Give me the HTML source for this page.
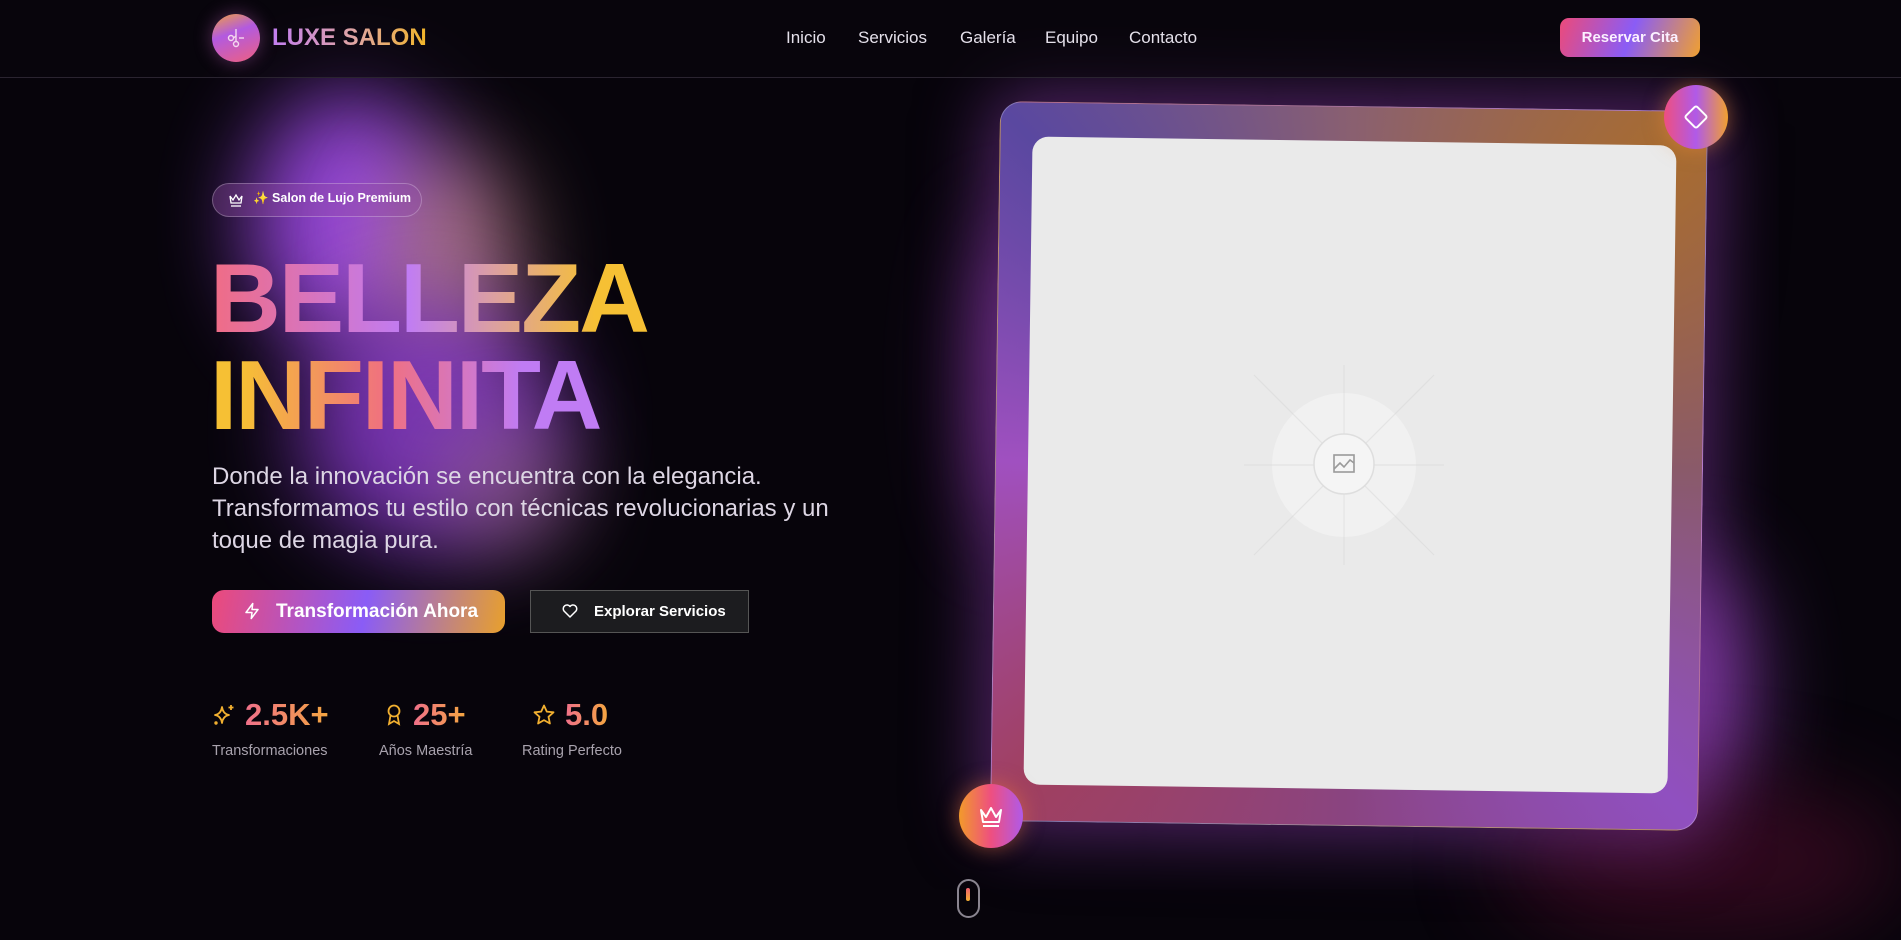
<!DOCTYPE html>
<html><head><meta charset="utf-8"><style>
*{margin:0;padding:0;box-sizing:border-box}
html,body{width:1901px;height:924px;overflow:hidden;background:#07040b;font-family:"Liberation Sans",sans-serif;color:#fff}
.abs{position:absolute}
.blob{position:absolute;border-radius:50%;filter:blur(45px)}
header{position:absolute;left:0;top:0;width:1901px;height:78px;border-bottom:1px solid #2a2430;background:rgba(10,6,14,.6)}
.nav a{position:absolute;top:28px;font-size:17px;color:#e4e0ea;text-decoration:none}
.grad{background-clip:text;-webkit-background-clip:text;color:transparent}
h1{position:absolute;left:210px;font-size:101px;font-weight:900;letter-spacing:-2px;line-height:1;white-space:nowrap}
p.lead{position:absolute;left:212px;top:461px;font-size:24px;line-height:32px;color:#ddd6e4;width:672px}
.stat .n{position:absolute;top:697px;font-size:31px;font-weight:bold;background:linear-gradient(90deg,#f0708a,#f4a640);-webkit-background-clip:text;background-clip:text;color:transparent}
.stat .l{position:absolute;top:743px;font-size:14.5px;color:#a8a2ad}
</style></head><body>
<!-- background glows -->
<div class="blob" style="left:250px;top:90px;width:200px;height:260px;background:#9a48e0;opacity:.95"></div>
<div class="blob" style="left:380px;top:150px;width:140px;height:230px;background:#c48890;opacity:.75"></div>
<div class="blob" style="left:300px;top:300px;width:260px;height:250px;background:#8f3ed6;opacity:.8"></div>
<div class="blob" style="left:440px;top:420px;width:130px;height:130px;background:#a07088;opacity:.6"></div>
<div class="blob" style="left:980px;top:220px;width:70px;height:320px;background:#a640c8;opacity:.6"></div>
<div class="blob" style="left:1640px;top:560px;width:110px;height:260px;background:#a44ad0;opacity:.7"></div>
<div class="blob" style="left:1500px;top:780px;width:400px;height:160px;background:#3a0a22;opacity:.8"></div>

<!-- frame -->
<div class="abs" style="left:995px;top:106px;width:708px;height:720px;border-radius:22px;transform:rotate(0.8deg);box-shadow:0 0 70px 10px rgba(160,70,200,.5);"></div>
<div class="abs" style="left:995px;top:106px;width:708px;height:720px;border-radius:22px;transform:rotate(0.8deg);background:conic-gradient(from 0deg at 50% 50%,#8a6070,#a86c30 45deg,#8a5a6a 90deg,#9050c0 135deg,#8a4480 180deg,#a04060 225deg,#a050c0 270deg,#5a48a0 315deg,#8a6070 360deg);border:1px solid rgba(255,255,255,.25)"></div>
<div class="abs" style="left:1028px;top:141px;width:644px;height:648px;border-radius:16px;background:#eaeaea;transform:rotate(0.8deg)"></div>
<svg class="abs" style="left:1244px;top:365px" width="200" height="200" viewBox="0 0 200 200">
<g stroke="#e0e0e0" stroke-width="1.2">
<line x1="100" y1="0" x2="100" y2="200"/><line x1="0" y1="100" x2="200" y2="100"/>
<line x1="10" y1="10" x2="190" y2="190"/><line x1="190" y1="10" x2="10" y2="190"/></g>
<circle cx="100" cy="100" r="72" fill="#f1f1f1"/>
<g stroke="#e4e4e4" stroke-width="1.2">
<line x1="100" y1="28" x2="100" y2="172"/><line x1="28" y1="100" x2="172" y2="100"/>
<line x1="49" y1="49" x2="151" y2="151"/><line x1="151" y1="49" x2="49" y2="151"/></g>
<circle cx="100" cy="99" r="30" fill="#f5f5f5" stroke="#dedede" stroke-width="1.5"/>
<rect x="90" y="90" width="20" height="17" fill="none" stroke="#9a9a9a" stroke-width="1.6"/>
<path d="M90 104 L96 98 L100 102 L106 95 L110 98" fill="none" stroke="#9a9a9a" stroke-width="1.6"/>
</svg>
<!-- badges -->
<div class="abs" style="left:1664px;top:85px;width:64px;height:64px;border-radius:50%;background:linear-gradient(90deg,#ee4f80,#b05ae8 50%,#f0a030);box-shadow:0 0 20px rgba(240,140,60,.5)"></div>
<svg class="abs" style="left:1680px;top:101px" width="32" height="32" viewBox="0 0 32 32"><rect x="8" y="8" width="16" height="16" rx="2" transform="rotate(45 16 16)" fill="none" stroke="#fff" stroke-width="2"/></svg>
<div class="abs" style="left:959px;top:784px;width:64px;height:64px;border-radius:50%;background:linear-gradient(90deg,#f29a2a,#ee4f80 50%,#b05ae8);box-shadow:0 0 20px rgba(240,120,60,.5)"></div>
<svg class="abs" style="left:975px;top:800px" width="32" height="32" viewBox="0 0 32 32"><path d="M6 10 L11 17 L16 8 L21 17 L26 10 L24 22 H8 Z" fill="none" stroke="#fff" stroke-width="2" stroke-linejoin="round"/><line x1="8" y1="26" x2="24" y2="26" stroke="#fff" stroke-width="2"/></svg>

<header></header>
<div class="abs" style="left:212px;top:14px;width:48px;height:48px;border-radius:50%;background:linear-gradient(160deg,#f0a040,#b25ae0 40%,#ee6080);box-shadow:0 0 18px rgba(200,100,200,.4)"></div>
<svg class="abs" style="left:224px;top:26px" width="24" height="24" viewBox="0 0 24 24" fill="none" stroke="#f4d8f0" stroke-width="1.4"><circle cx="7" cy="12" r="2.5"/><circle cx="12" cy="18" r="2.5"/><line x1="12" y1="3" x2="12" y2="15.5"/><line x1="9.5" y1="12" x2="12" y2="10"/><line x1="15" y1="12" x2="20" y2="12"/></svg>
<div class="abs grad" style="left:272px;top:24px;font-size:24px;font-weight:bold;background-image:linear-gradient(90deg,#c27ef0,#e0a6a0 55%,#f2b528)">LUXE SALON</div>
<div class="nav"><a style="left:786px">Inicio</a><a style="left:858px">Servicios</a><a style="left:960px">Galería</a><a style="left:1045px">Equipo</a><a style="left:1129px">Contacto</a></div>
<div class="abs" style="left:1560px;top:18px;width:140px;height:39px;border-radius:9px;background:linear-gradient(110deg,#ec4a7a,#8a5cf6 50%,#f0a030);font-size:15px;font-weight:bold;text-align:center;line-height:39px;color:#fbf0ff">Reservar Cita</div>

<!-- badge -->
<div class="abs" style="left:212px;top:183px;width:210px;height:34px;border-radius:17px;border:1px solid rgba(255,255,255,.25);background:rgba(150,80,170,.35)"></div>
<svg class="abs" style="left:228px;top:192px" width="16" height="16" viewBox="0 0 16 16" fill="none" stroke="#fff" stroke-width="1.3"><path d="M2 4 L5 8 L8 3 L11 8 L14 4 L13 11 H3 Z"/><line x1="3" y1="14" x2="13" y2="14"/></svg>
<div class="abs" style="left:253px;top:191px;font-size:12.5px;font-weight:bold;color:#fff">✨ Salon de Lujo Premium</div>

<h1 class="grad" style="top:249px;font-size:98px;background-image:linear-gradient(90deg,#f06c84,#c07cf4 45%,#dca0a0 65%,#f6c034 88%)">BELLEZA</h1>
<h1 class="grad" style="top:346px;font-size:98px;background-image:linear-gradient(90deg,#f6c034 8%,#f07080 45%,#c07cf4 80%)">INFINITA</h1>
<p class="lead">Donde la innovación se encuentra con la elegancia. Transformamos tu estilo con técnicas revolucionarias y un toque de magia pura.</p>

<div class="abs" style="left:212px;top:590px;width:293px;height:43px;border-radius:12px;background:linear-gradient(100deg,#ec4a7a,#8a5cf6 52%,#e8a02c)"></div>
<svg class="abs" style="left:243px;top:602px" width="18" height="18" viewBox="0 0 24 24" fill="none" stroke="#fff" stroke-width="2" stroke-linejoin="round"><path d="M13 2 L4 14 H12 L11 22 L20 10 H12 Z"/></svg>
<div class="abs" style="left:276px;top:601px;font-size:19px;font-weight:bold">Transformación Ahora</div>
<div class="abs" style="left:530px;top:590px;width:219px;height:43px;border:1px solid #555;background:#1c1c1f"></div>
<svg class="abs" style="left:561px;top:602px" width="18" height="18" viewBox="0 0 24 24" fill="none" stroke="#fff" stroke-width="2"><path d="M12 20 L4 12 A4.5 4.5 0 0 1 12 6 A4.5 4.5 0 0 1 20 12 Z" stroke-linejoin="round"/></svg>
<div class="abs" style="left:594px;top:603px;font-size:15px;font-weight:bold">Explorar Servicios</div>

<div class="stat">
<svg class="abs" style="left:212px;top:703px" width="24" height="24" viewBox="0 0 24 24" fill="none" stroke="#f2b030" stroke-width="1.8" stroke-linejoin="round"><path d="M10 4 Q11 11 17 12 Q11 13 10 20 Q9 13 3 12 Q9 11 10 4Z"/><path d="M19 2 V7 M16.5 4.5 H21.5"/><circle cx="4" cy="20" r=".8"/></svg>
<div class="n" style="left:245px">2.5K+</div><div class="l" style="left:212px">Transformaciones</div>
<svg class="abs" style="left:383px;top:703px" width="22" height="24" viewBox="0 0 22 24" fill="none" stroke="#f2b030" stroke-width="1.8"><circle cx="11" cy="8" r="5.5"/><path d="M7.5 12.5 L6 21 L11 18 L16 21 L14.5 12.5"/></svg>
<div class="n" style="left:413px">25+</div><div class="l" style="left:379px">Años Maestría</div>
<svg class="abs" style="left:532px;top:703px" width="24" height="24" viewBox="0 0 24 24" fill="none" stroke="#f2b030" stroke-width="1.8" stroke-linejoin="round"><path d="M12 2.5 L14.8 8.6 L21.5 9.3 L16.5 13.8 L17.9 20.5 L12 17.1 L6.1 20.5 L7.5 13.8 L2.5 9.3 L9.2 8.6 Z"/></svg>
<div class="n" style="left:565px">5.0</div><div class="l" style="left:522px">Rating Perfecto</div>
</div>

<div class="abs" style="left:957px;top:879px;width:23px;height:39px;border:2px solid #8a8590;border-radius:12px"></div>
<div class="abs" style="left:966px;top:888px;width:4px;height:13px;border-radius:2px;background:linear-gradient(#f06070,#f4b030)"></div>
</body></html>
